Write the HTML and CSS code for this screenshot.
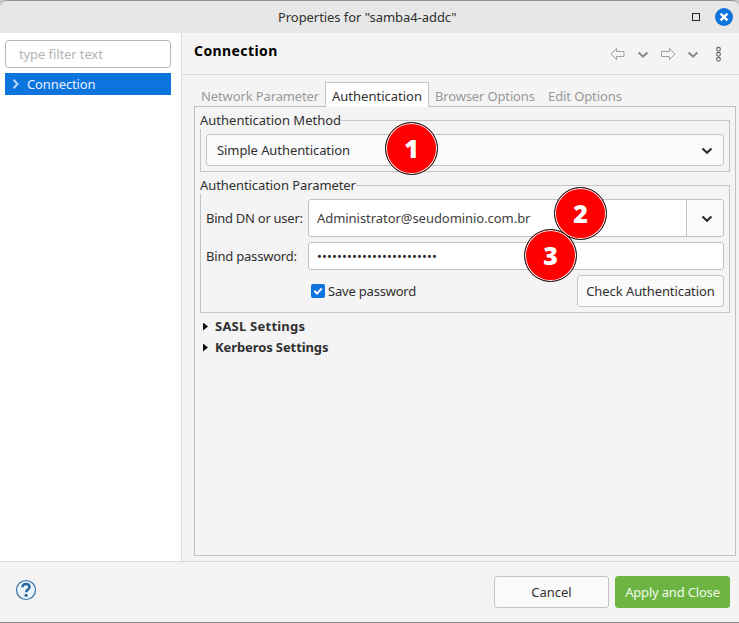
FILE: index.html
```html
<!DOCTYPE html>
<html lang="en">
<head>
<meta charset="utf-8">
<title>Properties for "samba4-addc"</title>
<link rel="stylesheet" href="styles.css">
</head>
<body>
<div class="window">
  <header class="titlebar">
    <span class="title">Properties for "samba4-addc"</span>
    <div class="controls">
      <span class="maximize"></span>
      <svg class="close" width="18" height="18" viewBox="0 0 18 18"><circle cx="9" cy="9" r="9" fill="#0d74de"/><path d="M5.6 5.6l6.8 6.8M12.4 5.6l-6.8 6.8" stroke="#fff" stroke-width="2.3"/></svg>
    </div>
  </header>
  <div class="body">
    <aside class="sidebar">
      <div class="filter"><span class="t-filter">type filter text</span></div>
      <div class="tree-item">
        <svg width="8" height="10" viewBox="0 0 8 10"><path d="M1.500 0.700l4 4.300-4 4.300" fill="none" stroke="#b4d5f5" stroke-width="2.100"/></svg>
        <span class="t-item">Connection</span>
      </div>
    </aside>
    <main class="main">
      <div class="page-head">
        <h1>Connection</h1>
        <svg class="tools" width="114" height="18" viewBox="0 0 114 18" fill="none">
          <path d="M1 9l5.500-5.500v3h7.500v5h-7.500v3z" stroke="#a0a0a0" stroke-linejoin="round"/>
          <path d="M28.500 7.500l4.500 4 4.500-4" stroke="#8d8d8d" stroke-width="2.200"/>
          <path d="M65 9l-5.500-5.500v3h-8v5h8v3z" stroke="#a0a0a0" stroke-linejoin="round"/>
          <path d="M78.500 7.500l4.500 4 4.500-4" stroke="#8d8d8d" stroke-width="2.200"/>
          <g stroke="#666" stroke-width="1.100"><circle cx="108.500" cy="4.300" r="1.900"/><circle cx="108.500" cy="9.300" r="1.900"/><circle cx="108.500" cy="14.300" r="1.900"/></g>
        </svg>
      </div>
      <nav class="tabs">
        <span class="tab tab-network"><span class="t-network">Network Parameter</span></span>
        <span class="tab active"><span class="t-auth">Authentication</span></span>
        <span class="tab tab-browser"><span class="t-browser">Browser Options</span></span>
        <span class="tab tab-edit"><span class="t-edit">Edit Options</span></span>
      </nav>
      <section class="panel">
        <div class="group method">
          <div class="legend"><span class="t-method">Authentication Method</span></div>
          <div class="combo">
            <span class="t-simple">Simple Authentication</span>
            <svg class="combo-arrow" width="12" height="8" viewBox="0 0 12 8"><path d="M1.500 1.500l4.500 4.200 4.500-4.200" fill="none" stroke="#2d2d2d" stroke-width="2.200"/></svg>
          </div>
          <span class="badge badge-1">1</span>
        </div>
        <div class="group parameter">
          <div class="legend"><span class="t-param">Authentication Parameter</span></div>
          <div class="form">
            <label class="t-bind">Bind DN or user:</label>
            <div class="user">
              <div class="user-text"><span class="t-admin">Administrator@seudominio.com.br</span></div>
              <div class="drop"><svg width="12" height="8" viewBox="0 0 12 8"><path d="M1.500 1.500l4.500 4.200 4.500-4.200" fill="none" stroke="#2d2d2d" stroke-width="2.200"/></svg></div>
            </div>
            <label class="t-pass">Bind password:</label>
            <div class="password"><span class="dots">••••••••••••••••••••••••</span></div>
            <div class="actions">
              <div class="check">
                <svg width="14" height="14" viewBox="0 0 14 14"><rect width="14" height="14" rx="2" fill="#0d74de"/><path d="M3.300 6.700l2.700 2.900 4.800-5.200" fill="none" stroke="#fff" stroke-width="2"/></svg>
                <span class="t-save">Save password</span>
              </div>
              <button class="button check-auth"><span class="t-check">Check Authentication</span></button>
            </div>
          </div>
          <span class="badge badge-2">2</span>
          <span class="badge badge-3">3</span>
        </div>
        <div class="expander"><span class="arrow"></span><span class="t-sasl">SASL Settings</span></div>
        <div class="expander"><span class="arrow"></span><span class="t-kerb">Kerberos Settings</span></div>
      </section>
    </main>
  </div>
  <footer class="footer">
    <svg class="help" width="22" height="22" viewBox="0 0 22 22"><circle cx="11" cy="11" r="9.500" fill="#edf4f9" stroke="#3871a5" stroke-width="1.200"/><path d="M7.500 8.200C7.500 3.800 14.500 4.100 14.500 8c0 2.500-3.400 2.500-3.400 5.200" fill="none" stroke="#29669f" stroke-width="2.500"/><circle cx="11.100" cy="16.300" r="1.600" fill="#29669f"/></svg>
    <div class="buttons">
      <button class="button"><span class="t-cancel">Cancel</span></button>
      <button class="button primary"><span class="t-apply">Apply and Close</span></button>
    </div>
  </footer>
</div>
</body>
</html>
```
FILE: styles.css
```css
* { box-sizing: border-box; }
body {
  margin: 0;
  background: #c9c9c9;
  font: 13px/18px "Noto Sans", "Open Sans", sans-serif;
  color: #303030;
}
span, label, h1 { white-space: nowrap; }
svg { display: block; flex: none; }
.window {
  display: flex;
  flex-direction: column;
  width: 739px;
  height: 623px;
  overflow: hidden;
  border-top: 1px solid #929292;
  border-bottom: 1px solid #858585;
  border-radius: 7px 7px 0 0;
  background: #f4f4f4;
}
.titlebar {
  position: relative;
  display: flex;
  justify-content: flex-end;
  align-items: center;
  height: 32px;
  background: #e7e7e7;
}
.title { position: absolute; left: 278px; top: 7px; letter-spacing: -0.06px; }
.controls { display: flex; align-items: center; gap: 15px; padding-right: 6px; }
.maximize { width: 8px; height: 8px; border: 1px solid #222; }
.body { display: flex; height: 528px; }
.sidebar {
  width: 182px;
  padding: 7px 10px 0 5px;
  border-right: 1px solid #dcdcdc;
  background: #fff;
}
.filter {
  height: 28px;
  padding: 4px 13px;
  border: 1px solid #b8b8b8;
  border-radius: 4px;
  color: #b4b4b4;
}
.t-filter { letter-spacing: -0.1px; }
.t-item { letter-spacing: -0.12px; }
.t-network { letter-spacing: -0.12px; }
.t-browser { letter-spacing: -0.15px; }
.t-edit { letter-spacing: -0.1px; }
.t-simple, .t-param { letter-spacing: -0.08px; }
.t-admin { letter-spacing: -0.05px; }
.t-bind { letter-spacing: -0.27px; }
.t-pass, .t-save { letter-spacing: -0.2px; }
.t-check { letter-spacing: -0.08px; }
.t-sasl { letter-spacing: 0.23px; }
.t-kerb { letter-spacing: -0.1px; }
.t-apply { letter-spacing: -0.18px; }
.dots { letter-spacing: 0.11px; }
.tree-item {
  display: flex;
  align-items: center;
  gap: 7px;
  height: 22px;
  margin-top: 5px;
  padding-left: 7px;
  background: #0d74de;
  color: #e4f1fd;
}
.main { flex: 1; }
.page-head {
  display: flex;
  justify-content: space-between;
  height: 42px;
  padding: 9px 15px 0 12px;
  border-bottom: 1px solid #dcdcdc;
}
h1 { margin: 0; font: bold 14px/18px "Noto Sans", sans-serif; letter-spacing: 0.4px; color: #000; }
.tools { margin-top: 3px; }
.tabs { display: flex; position: relative; height: 25px; margin: 7px 4px -1px 12px; }
.tab { height: 24px; padding: 5px 0 0; color: #999; }
.tab-network { width: 131px; padding-left: 7px; }
.active {
  width: 104px;
  height: 25px;
  padding: 4px 0 0 6px;
  border: 1px solid #c4c4c4;
  border-bottom: 0;
  background: #fff;
  color: #303030;
}
.tab-browser { width: 119px; padding-left: 6px; }
.panel {
  width: 542px;
  height: 450px;
  margin-left: 12px;
  padding: 13px 5px 0;
  border: 1px solid #c1c1c1;
}
.group { position: relative; width: 530px; border: 1px solid #c4c4c4; }
.legend { display: flex; height: 18px; margin: -10px 0 0 -1px; }
.legend span { background: #f4f4f4; }
.method { height: 52px; margin-bottom: 13px; }
.combo {
  display: flex;
  justify-content: space-between;
  align-items: center;
  height: 32px;
  margin: 5px 5px 0;
  padding: 0 10px;
  border: 1px solid #c4c4c4;
  border-radius: 3px;
  background: #fafafa;
}
.combo-arrow { margin-top: 2px; }
.parameter { height: 128px; }
.form {
  display: grid;
  grid-template-columns: 102px 416px;
  grid-template-rows: 38px 28px 32px;
  row-gap: 5px;
  align-items: center;
  margin: 5px 5px 0;
}
.user {
  display: flex;
  height: 38px;
  border: 1px solid #c0c0c0;
  border-radius: 3px;
  background: #fff;
  color: #404040;
}
.user-text { flex: 1; padding: 9px 8px; }
.drop {
  display: flex;
  align-items: center;
  justify-content: center;
  width: 37px;
  border-left: 1px solid #c4c4c4;
  border-radius: 0 2px 2px 0;
  background: #fafafa;
}
.drop svg { margin: 2px 0 0 3px; }
.password {
  height: 28px;
  padding: 4px 8px;
  border: 1px solid #c0c0c0;
  border-radius: 3px;
  background: #fff;
}
.actions { grid-column: 2; display: flex; justify-content: space-between; }
.check { display: flex; align-items: center; gap: 3px; padding-left: 3px; }
.button {
  width: 115px;
  height: 32px;
  padding: 0;
  border: 1px solid #c4c4c4;
  border-radius: 3px;
  background: #fafafa;
  font: inherit;
  color: inherit;
}
.check-auth { width: 147px; }
.primary { border-color: #6db442; background: #6db442; color: #f0fae9; }
.expander {
  display: flex;
  align-items: center;
  gap: 7px;
  height: 21px;
  padding-left: 3px;
  font-weight: bold;
}
.parameter + .expander { margin-top: 2px; }
.arrow {
  width: 5px;
  height: 8px;
  margin-top: 2px;
  background: #111;
  clip-path: polygon(0 0, 100% 50%, 0 100%);
}
.badge {
  position: absolute;
  width: 53px;
  height: 53px;
  border: 1px solid #111;
  border-radius: 50%;
  background: #f00;
  box-shadow: inset 0 0 0 1px #fff;
  color: #fff;
  text-align: center;
  font: 800 25px/50px "Open Sans", "Noto Sans", sans-serif;
}
.badge-1 { left: 184px; top: 1px; }
.badge-2 { left: 353px; top: 1px; }
.badge-3 { left: 323px; top: 43px; }
.footer {
  display: flex;
  justify-content: space-between;
  height: 61px;
  padding: 14px 9px 0 15px;
  border-top: 1px solid #dcdcdc;
}
.help { margin-top: 3px; }
.buttons { display: flex; gap: 6px; }
```
